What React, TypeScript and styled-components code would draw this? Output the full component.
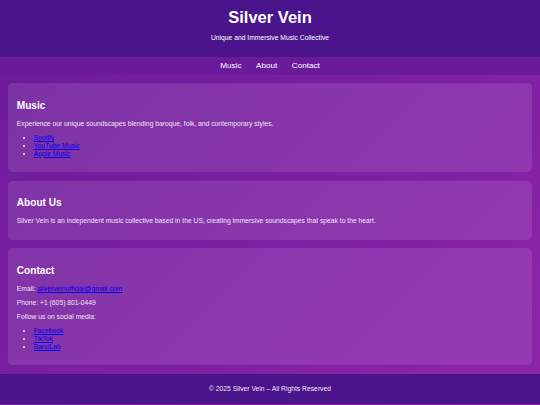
import React from 'react';
import styled, { createGlobalStyle } from 'styled-components';

// reference is a 1280px page scaled down to 540px, so sizes are original * 0.42
const GlobalStyle = createGlobalStyle`
    html, body {
        margin: 0;
        padding: 0;
    }
    body {
        font-family: "Liberation Sans", Arial, sans-serif;
        font-size: 6.75px;
        line-height: 1.15;
        color: #f3e5f5;
        background: linear-gradient(135deg, #6a1b9a, #8e24aa);
        min-height: 100vh;
    }
`;

const Header = styled.header`
    background: #4a148c;
    color: #fff;
    text-align: center;
    padding: 8.4px 8.4px;
`;

const Title = styled.h1`
    margin: 0;
    font-size: 16.5px;
    line-height: 19px;
    font-weight: bold;
`;

const Tagline = styled.p`
    margin: 6.75px 0;
    line-height: 7.8px;
`;

const Nav = styled.nav`
    background: #6a1b9a;
    display: flex;
    justify-content: center;
    gap: 14.6px;
    padding: 4.2px 0;
`;

const NavLink = styled.a`
    color: #fff;
    text-decoration: none;
    font-size: 8.1px;
    line-height: 9.3px;
`;

const Main = styled.main`
    display: flex;
    flex-direction: column;
    gap: 8.4px;
    padding: 8.4px;
`;

const Card = styled.section`
    background: rgba(255, 255, 255, 0.1);
    border-radius: 4.2px;
    padding: 8.4px;
    line-height: 7.8px;

    h2 {
        color: #fff;
        font-size: 10.1px;
        line-height: 11.6px;
        margin: 8.4px 0;
    }
    p {
        margin: 6.2px 0;
    }
    ul {
        margin: 6.4px 0;
        padding-left: 16.9px;
    }
    a {
        color: #0000ee;
    }
`;

const Footer = styled.footer`
    background: #4a148c;
    color: #f3e5f5;
    text-align: center;
    line-height: 7.8px;
    padding: 11.4px 8.4px;
`;

const musicLinks = ['Spotify', 'YouTube Music', 'Apple Music'];
const socialLinks = ['Facebook', 'TikTok', 'BandLab'];

export default function App() {
    return (
        <>
            <GlobalStyle />
            <Header>
                <Title>Silver Vein</Title>
                <Tagline>Unique and Immersive Music Collective</Tagline>
            </Header>
            <Nav>
                <NavLink href="#music">Music</NavLink>
                <NavLink href="#about">About</NavLink>
                <NavLink href="#contact">Contact</NavLink>
            </Nav>
            <Main>
                <Card id="music">
                    <h2>Music</h2>
                    <p>Experience our unique soundscapes blending baroque, folk, and contemporary styles.</p>
                    <ul>
                        {musicLinks.map(l => <li key={l}><a href="#">{l}</a></li>)}
                    </ul>
                </Card>
                <Card id="about">
                    <h2>About Us</h2>
                    <p>Silver Vein is an independent music collective based in the US, creating immersive soundscapes that speak to the heart.</p>
                </Card>
                <Card id="contact">
                    <h2>Contact</h2>
                    <p>Email: <a href="#">silverveinofficial@gmail.com</a></p>
                    <p>Phone: +1 (605) 801-0449</p>
                    <p>Follow us on social media:</p>
                    <ul>
                        {socialLinks.map(l => <li key={l}><a href="#">{l}</a></li>)}
                    </ul>
                </Card>
            </Main>
            <Footer>&copy; 2025 Silver Vein – All Rights Reserved</Footer>
        </>
    );
}
